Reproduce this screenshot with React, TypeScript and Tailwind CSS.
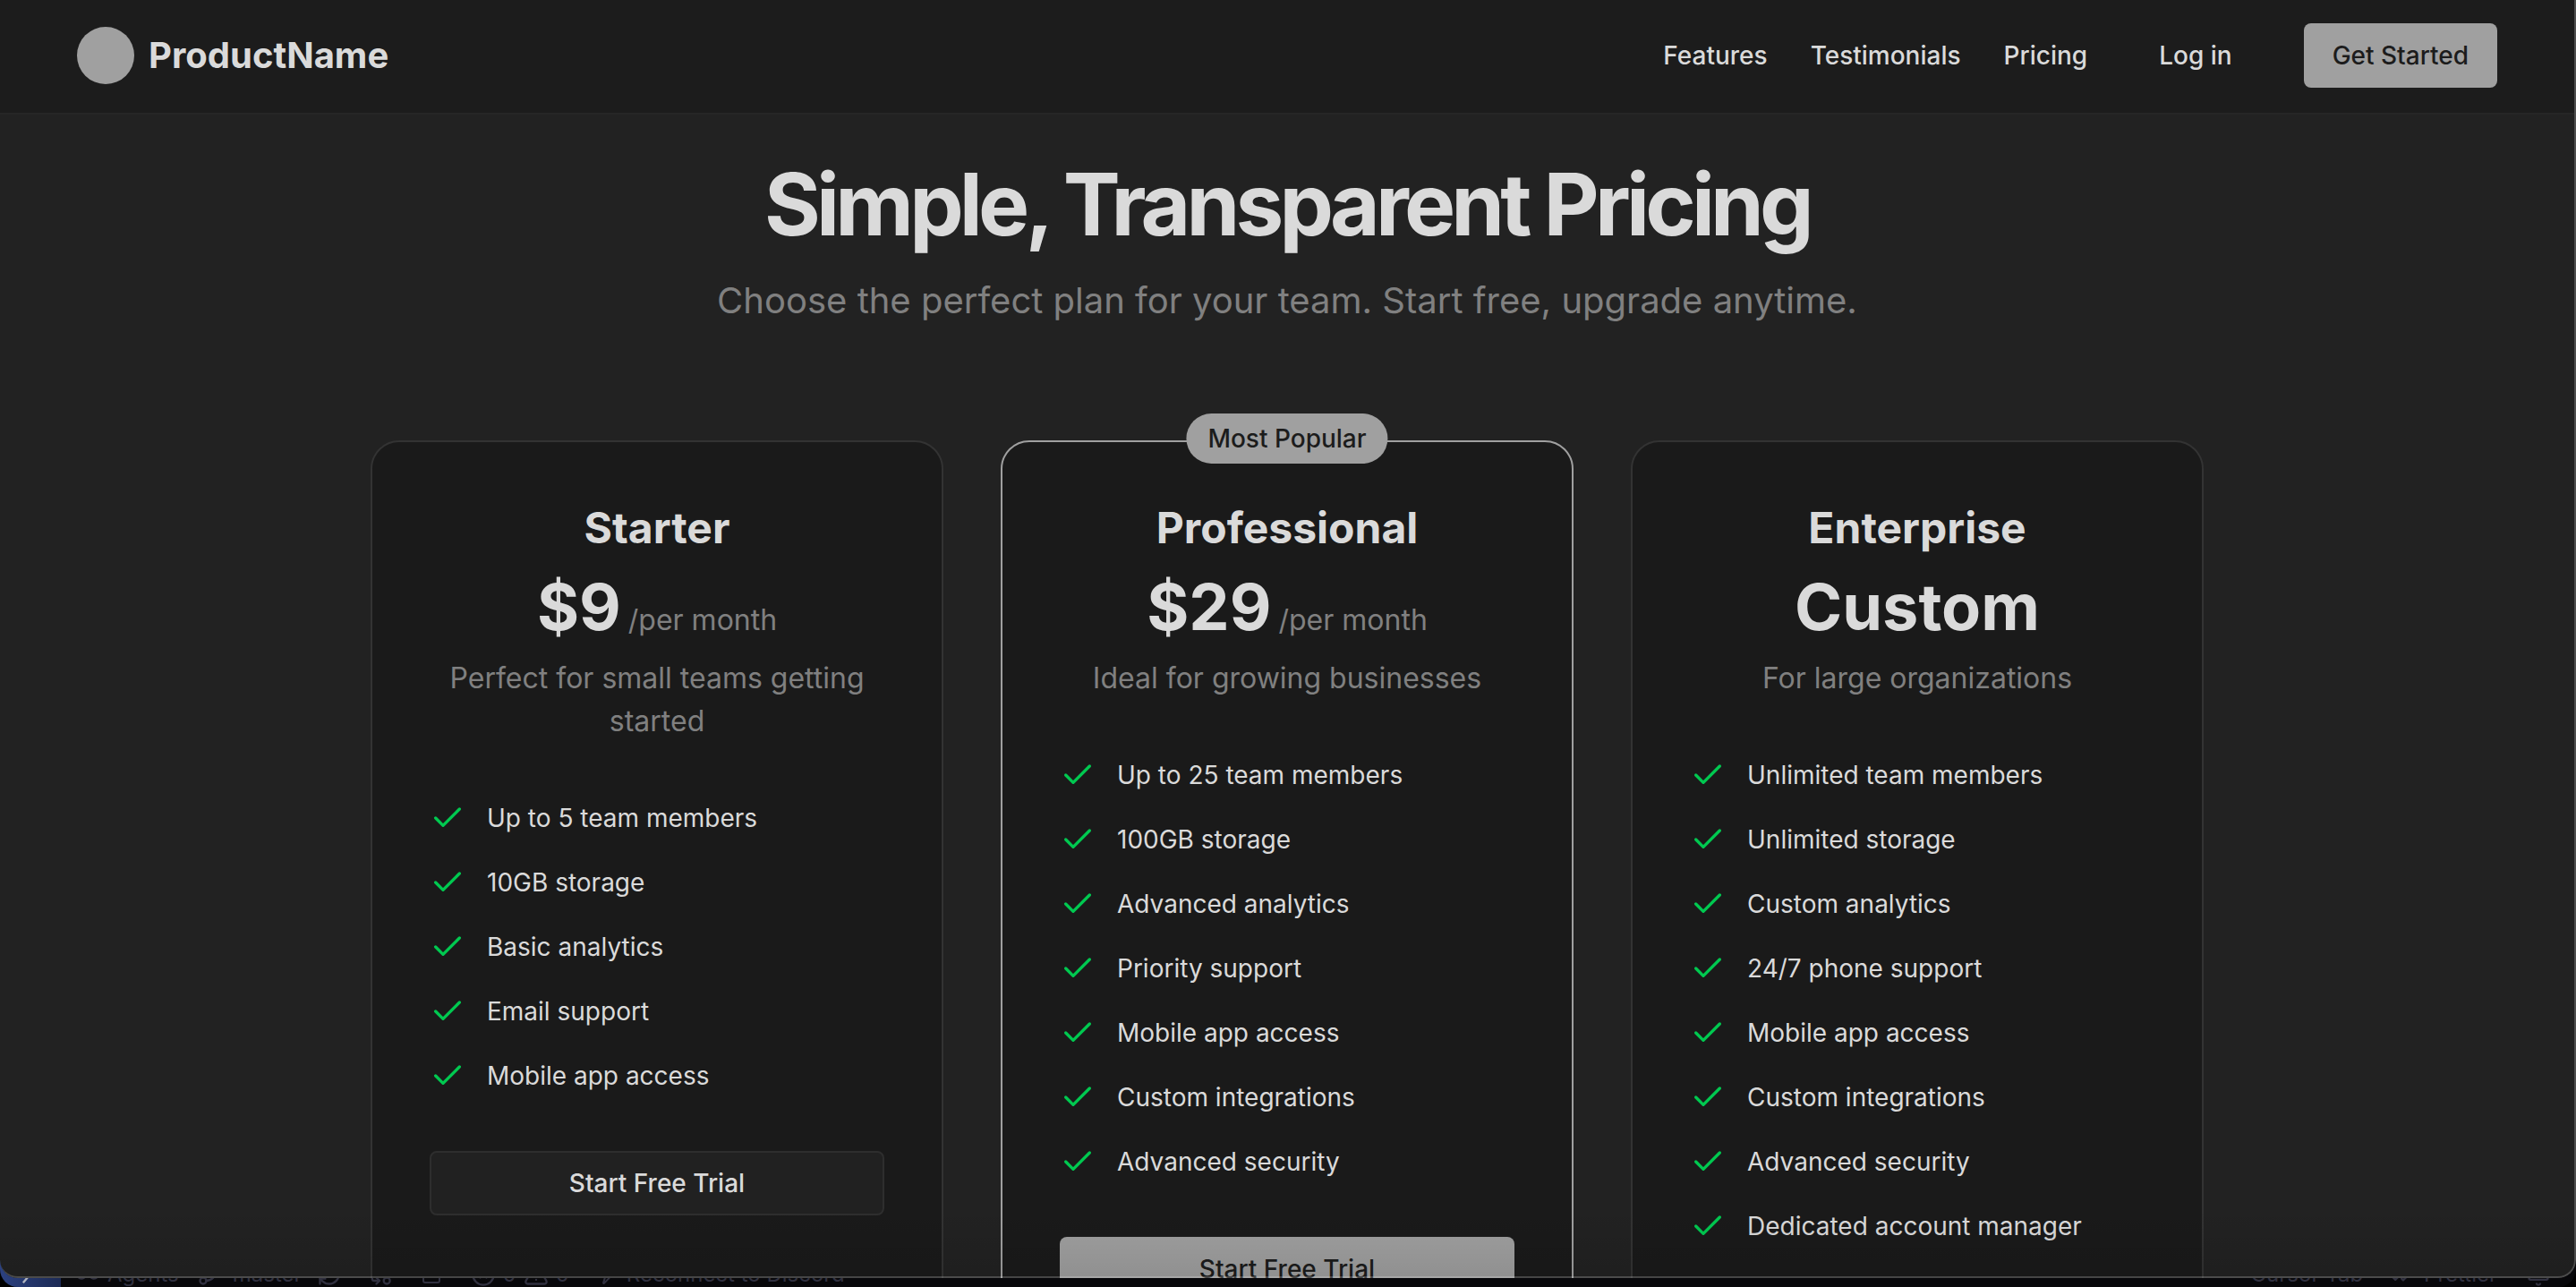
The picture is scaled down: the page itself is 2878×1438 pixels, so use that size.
import { Bell, CheckCheck, CircleX, GitBranch, GitCompareArrows, Infinity as InfinityIcon, RefreshCw, SquareArrowOutUpRight, TriangleAlert, Zap } from "lucide-react";

type Plan = {
  name: string;
  price: string;
  period?: string;
  description: string;
  features: string[];
  cta?: string;
  popular?: boolean;
};

const plans: Plan[] = [
  {
    name: "Starter",
    price: "$9",
    period: "/per month",
    description: "Perfect for small teams getting started",
    features: ["Up to 5 team members", "10GB storage", "Basic analytics", "Email support", "Mobile app access"],
    cta: "Start Free Trial",
  },
  {
    name: "Professional",
    price: "$29",
    period: "/per month",
    description: "Ideal for growing businesses",
    features: [
      "Up to 25 team members",
      "100GB storage",
      "Advanced analytics",
      "Priority support",
      "Mobile app access",
      "Custom integrations",
      "Advanced security",
    ],
    cta: "Start Free Trial",
    popular: true,
  },
  {
    name: "Enterprise",
    price: "Custom",
    description: "For large organizations",
    features: [
      "Unlimited team members",
      "Unlimited storage",
      "Custom analytics",
      "24/7 phone support",
      "Mobile app access",
      "Custom integrations",
      "Advanced security",
      "Dedicated account manager",
    ],
  },
];

function Check() {
  return (
    <svg viewBox="0 0 24 24" className="size-10 shrink-0 text-[#00c950]" fill="none" stroke="currentColor" strokeWidth="2" strokeLinecap="round" strokeLinejoin="round" aria-hidden="true">
      <path d="M20 6 9 17l-5-5" />
    </svg>
  );
}

function Header() {
  return (
    <header className="flex h-32 shrink-0 items-center justify-between border-b-2 border-[#262626] bg-[#1c1c1c] px-[86px] pb-0.5">
      <a href="#home" className="flex items-center gap-4">
        <span className="size-16 rounded-full bg-[#a0a0a0]" />
        <span className="text-[40px] leading-[56px] font-bold">ProductName</span>
      </a>
      <nav className="flex items-center text-[28px] leading-10 font-medium">
        <a href="#features" className="mr-12">Features</a>
        <a href="#testimonials" className="mr-12">Testimonials</a>
        <a href="#pricing" className="mr-20">Pricing</a>
        <a href="#login" className="mr-20">Log in</a>
        <button className="h-[72px] rounded-lg bg-[#a0a0a0] px-8 text-[#1c1c1c]">Get Started</button>
      </nav>
    </header>
  );
}

function PlanCard({ plan }: { plan: Plan }) {
  return (
    <article className={`relative rounded-[32px] border-2 bg-[#1a1a1a] px-16 py-16 ${plan.popular ? "border-[#a0a0a0]" : "border-[#333333]"}`}>
      {plan.popular && (
        <span className="absolute -top-8 left-1/2 flex h-14 -translate-x-1/2 items-center rounded-full bg-[#a0a0a0] px-6 text-[28px] leading-10 font-medium whitespace-nowrap text-[#1c1c1c]">
          Most Popular
        </span>
      )}
      <div className="text-center">
        <h2 className="text-[48px] leading-[64px] font-bold">{plan.name}</h2>
        <p className="mt-4 flex items-baseline justify-center gap-2">
          <span className="text-[72px] leading-[80px] font-bold">{plan.price}</span>
          {plan.period && <span className="text-[32px] leading-[48px] text-[#808080]">{plan.period}</span>}
        </p>
        <p className="mt-4 text-[32px] leading-[48px] text-[#808080]">{plan.description}</p>
      </div>
      <ul className="mt-16 flex flex-col gap-8">
        {plan.features.map((f) => (
          <li key={f} className="flex items-center gap-6 text-[28px] leading-10">
            <Check />
            {f}
          </li>
        ))}
      </ul>
      {plan.cta && (
        <button
          className={`mt-16 h-[72px] w-full rounded-lg text-[28px] leading-10 font-medium ${
            plan.popular ? "bg-[#a0a0a0] text-[#1c1c1c]" : "border-2 border-[#2e2e2e] bg-[#212121]"
          }`}
        >
          {plan.cta}
        </button>
      )}
    </article>
  );
}

/* Editor status bar, mostly tucked behind the browser window. */
function StatusBar() {
  return (
    <footer className="-mt-[34px] flex h-11 shrink-0 items-stretch justify-between overflow-hidden rounded-b-[20px] bg-[#07070a] text-2xl leading-7 text-[#30303f]">
      <div className="flex">
        <span className="flex w-[68px] items-center justify-center bg-linear-to-r from-[#2c4180] to-[#1c2a55] pt-4 text-[#b0b4c0]">
          <svg viewBox="0 0 24 24" className="size-7" fill="none" stroke="currentColor" strokeWidth="2" aria-hidden="true">
            <path d="M5 9l5 5-5 6M19 3l-5 5 5 5" />
          </svg>
        </span>
        <div className="flex items-center pt-4">
          <InfinityIcon className="ml-4 size-7" />
          <span className="ml-2">Agents</span>
          <GitBranch className="ml-5 size-7" />
          <span className="ml-3">master</span>
          <RefreshCw className="ml-4 size-7" />
          <GitCompareArrows className="ml-7 size-7" />
          <SquareArrowOutUpRight className="ml-8 size-6" />
          <CircleX className="ml-8 size-7" />
          <span className="ml-2">0</span>
          <TriangleAlert className="ml-2 size-7" />
          <span className="ml-2">0</span>
          <Zap className="ml-7 size-6" />
          <span className="ml-3">Reconnect to Discord</span>
        </div>
      </div>
      <div className="flex items-center pt-4 pr-7">
        <span>Cursor Tab</span>
        <CheckCheck className="ml-7 size-7" />
        <span className="ml-3">Prettier</span>
        <Bell className="ml-8 size-7" />
      </div>
    </footer>
  );
}

export default function App() {
  return (
    <div className="flex h-screen flex-col overflow-hidden bg-black font-['Inter',sans-serif] text-[#dadada]">
      <div className="relative z-10 flex min-h-0 grow flex-col overflow-hidden rounded-b-[20px] bg-[#222222] pr-0.5">
        <Header />
        <main className="flex flex-col items-center pt-[52px]">
          <h1 className="text-[96px] leading-[96px] font-bold tracking-tighter">Simple, Transparent Pricing</h1>
          <p className="mt-8 text-[40px] leading-[56px] text-[#808080]">Choose the perfect plan for your team. Start free, upgrade anytime.</p>
          <section id="pricing" className="mt-32 grid w-full max-w-[2048px] grid-cols-3 gap-16">
            {plans.map((p) => (
              <PlanCard key={p.name} plan={p} />
            ))}
          </section>
        </main>
        <div className="pointer-events-none absolute inset-x-0 bottom-0 h-20 bg-linear-to-t from-black/10 to-transparent" />
        <div className="pointer-events-none absolute inset-0 rounded-b-[20px] border-r-2 border-b-2 border-white/20" />
      </div>
      <StatusBar />
    </div>
  );
}
